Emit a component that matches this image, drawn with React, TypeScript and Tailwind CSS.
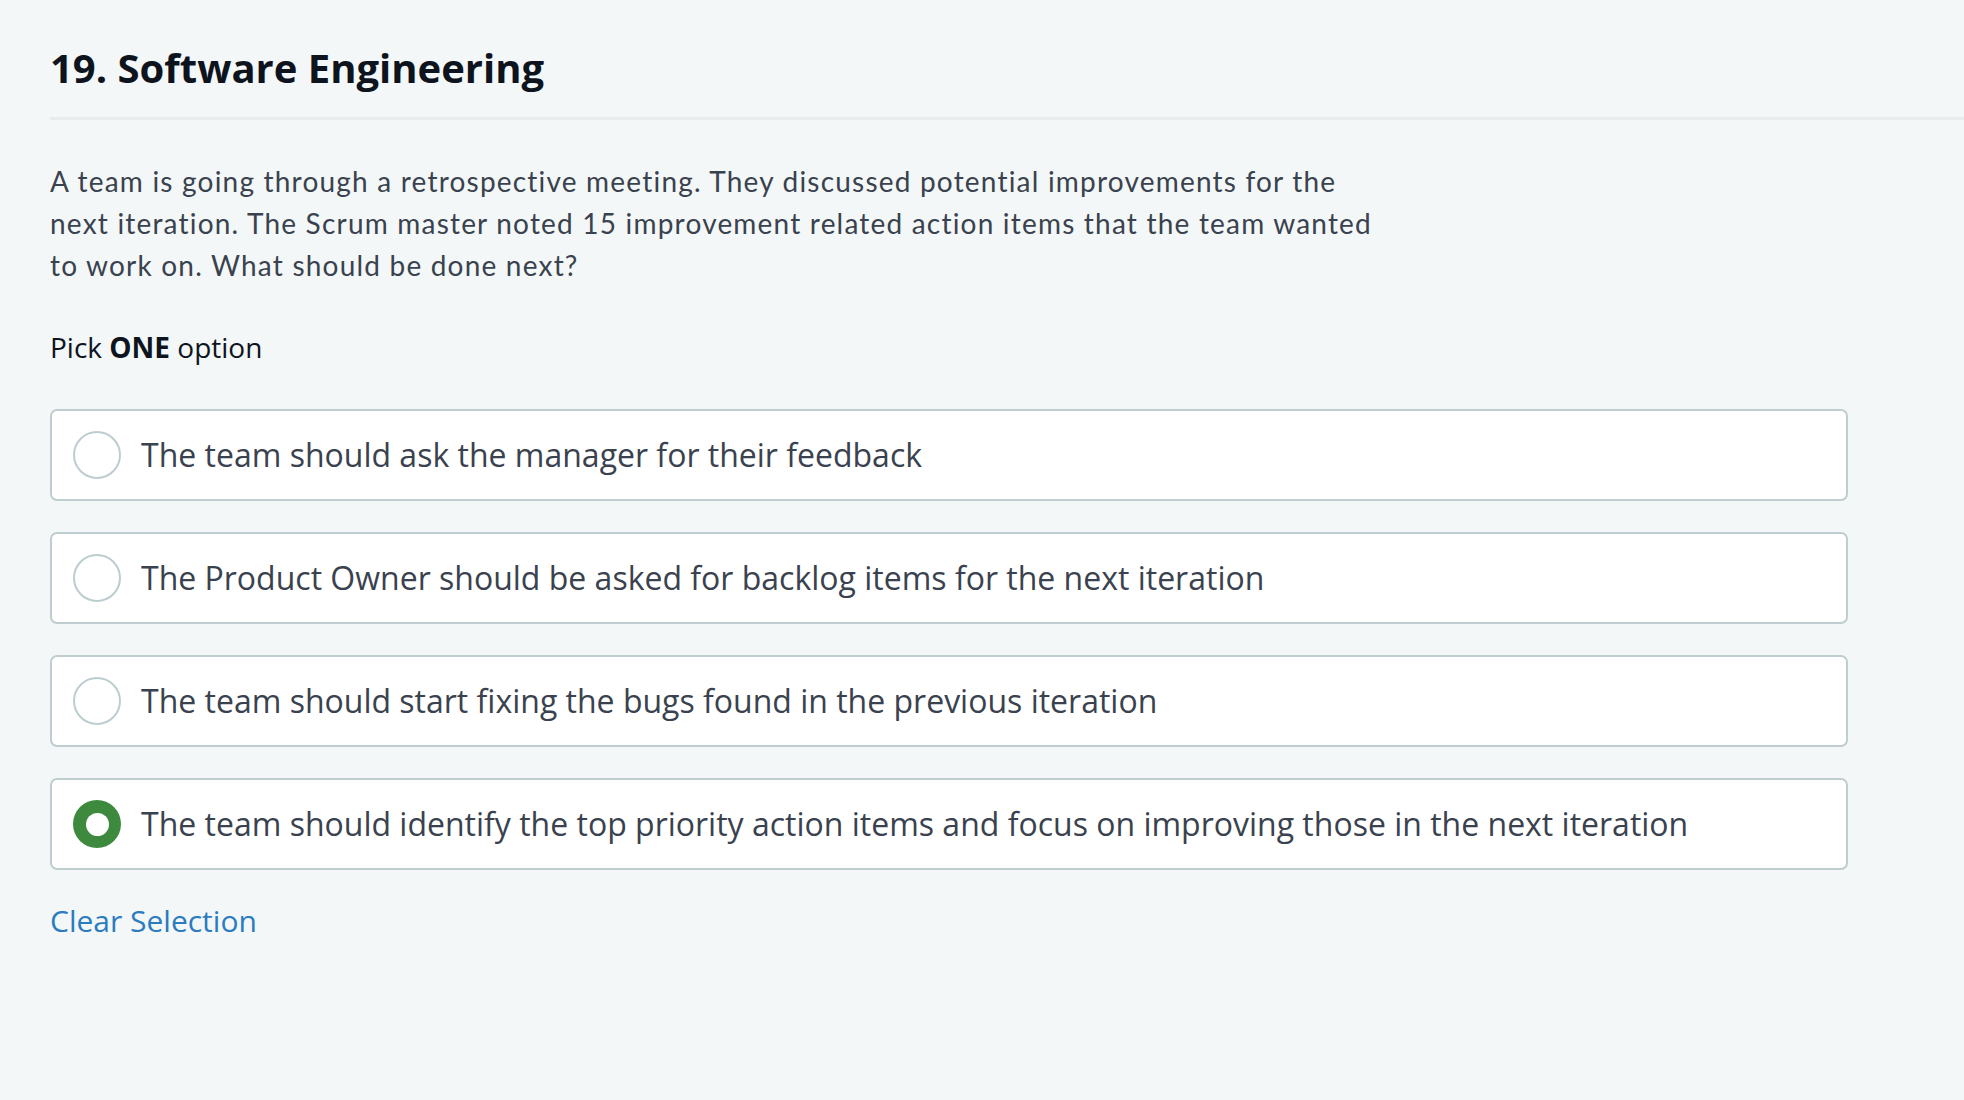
import { useState } from 'react';

const options = [
  'The team should ask the manager for their feedback',
  'The Product Owner should be asked for backlog items for the next iteration',
  'The team should start fixing the bugs found in the previous iteration',
  'The team should identify the top priority action items and focus on improving those in the next iteration',
];

export default function App() {
  const [selected, setSelected] = useState<number | null>(3);

  return (
    <div className="min-h-screen bg-[#f3f7f7] pl-[50px] pt-[39px]" style={{ fontFamily: '"Open Sans", sans-serif' }}>
      {/* Question header */}
      <h1 className="text-[40px] font-bold leading-[58px] text-[#0e141e] pb-[20px] border-b-[3px] border-[#e7ecee]">
        19. Software Engineering
      </h1>

      <div className="pr-[116px]">
        <p
          className="mt-[40px] text-[28px] leading-[42px] tracking-[1.2px] text-[#39424e]"
          style={{ fontFamily: 'Lato, sans-serif' }}
        >
          A team is going through a retrospective meeting. They discussed potential improvements for the
          <br />
          next iteration. The Scrum master noted 15 improvement related action items that the team wanted
          <br />
          to work on. What should be done next?
        </p>

        <p className="mt-[40px] text-[28px] leading-[42px] text-[#0e141e]">
          Pick <span className="font-bold">ONE</span> option
        </p>

        {/* Options */}
        <div className="mt-[41px] flex flex-col gap-[31px]">
          {options.map((opt, i) => {
            const isSel = selected === i;
            return (
              <button
                key={i}
                onClick={() => setSelected(i)}
                className="flex h-[92px] items-center rounded-[7px] border-2 border-[#bfcdd1] bg-white pl-[21px] text-left"
              >
                {isSel ? (
                  <span className="flex h-[48px] w-[48px] shrink-0 items-center justify-center rounded-full bg-[#3d8a3f]">
                    <span className="h-[23px] w-[23px] rounded-full bg-white" />
                  </span>
                ) : (
                  <span className="h-[48px] w-[48px] shrink-0 rounded-full border-2 border-[#bccdd0] bg-white" />
                )}
                <span className="ml-[20px] text-[32px] text-[#39424e]">{opt}</span>
              </button>
            );
          })}
        </div>

        <button
          onClick={() => setSelected(null)}
          className="mt-[30px] text-[30px] leading-[42px] text-[#2b7bbf]"
        >
          Clear Selection
        </button>
      </div>
    </div>
  );
}
